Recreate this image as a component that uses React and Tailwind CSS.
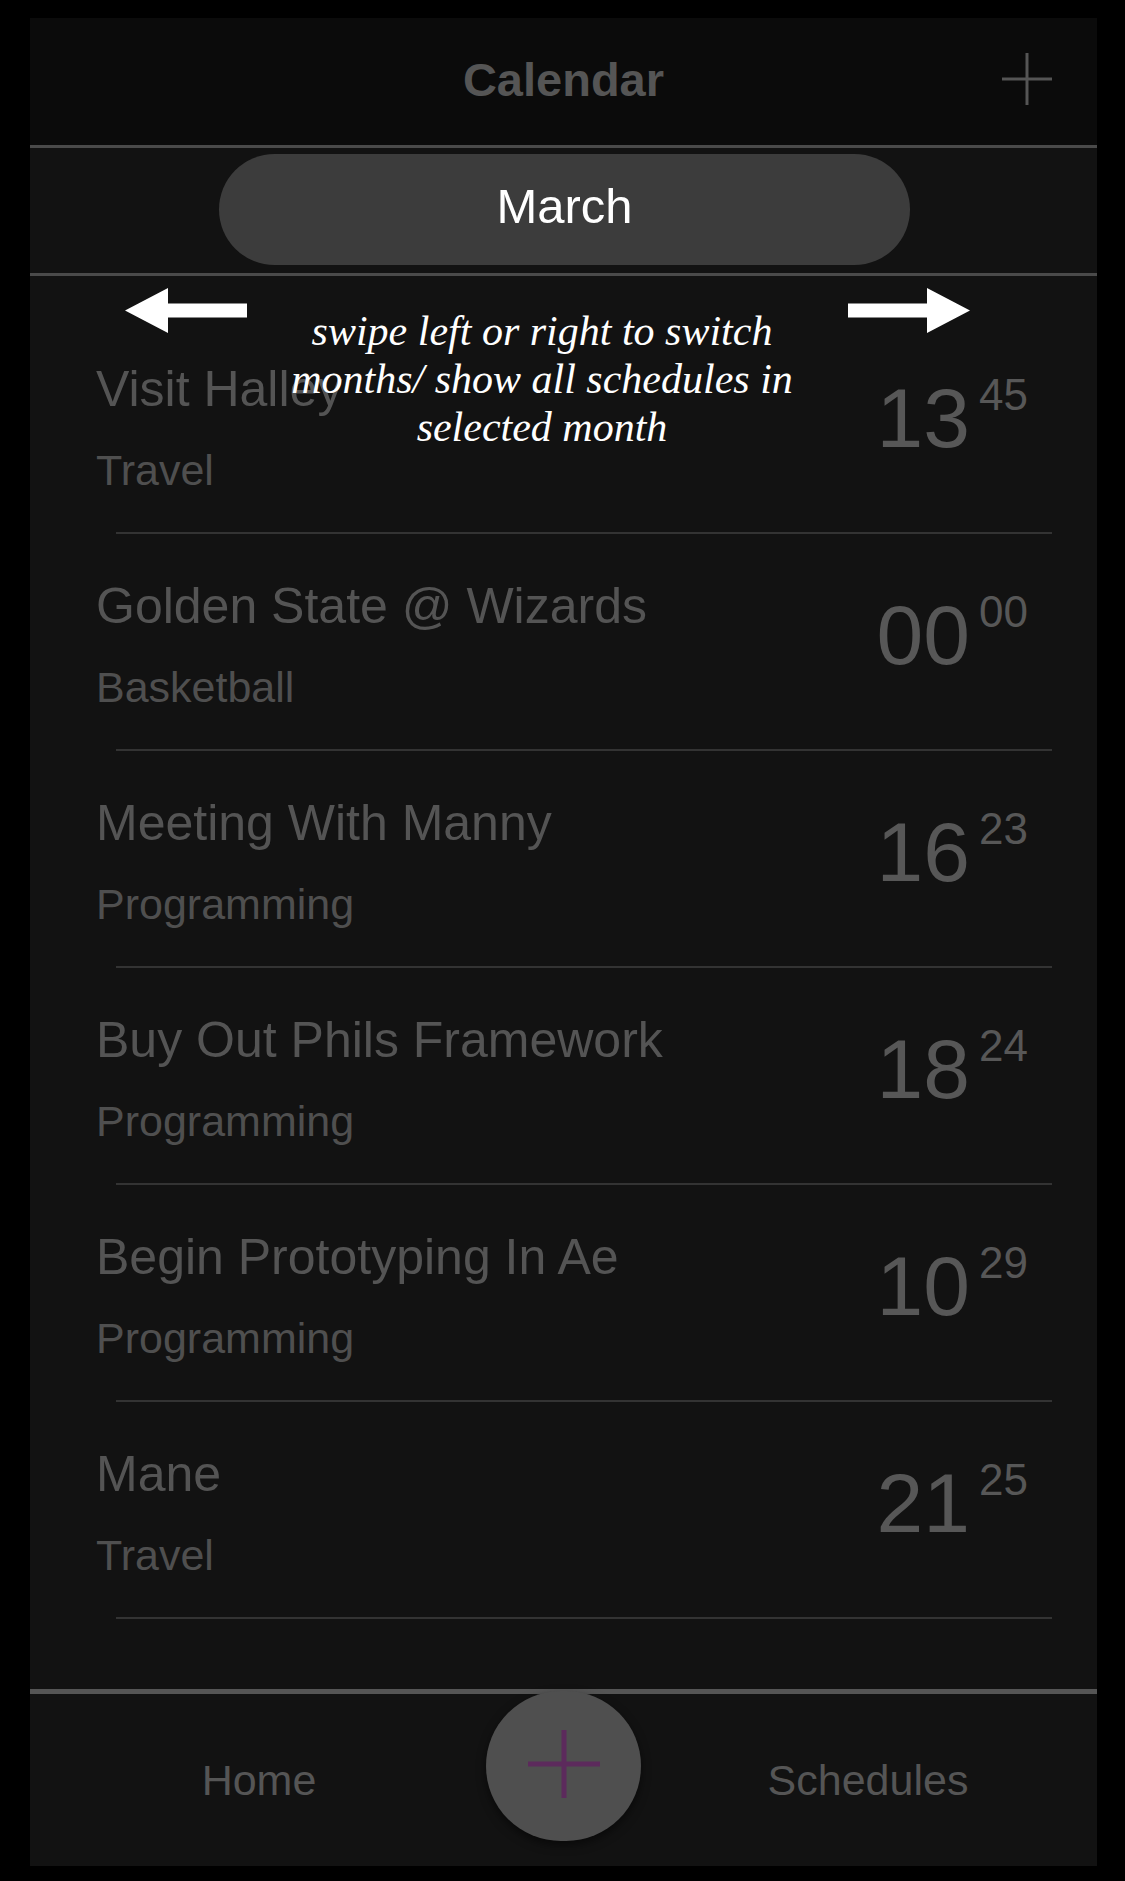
import React from 'react';

const rows = [
  { title: 'Visit Halley', tag: 'Travel', hour: '13', min: '45' },
  { title: 'Golden State @ Wizards', tag: 'Basketball', hour: '00', min: '00' },
  { title: 'Meeting With Manny', tag: 'Programming', hour: '16', min: '23' },
  { title: 'Buy Out Phils Framework', tag: 'Programming', hour: '18', min: '24' },
  { title: 'Begin Prototyping In Ae', tag: 'Programming', hour: '10', min: '29' },
  { title: 'Mane', tag: 'Travel', hour: '21', min: '25' },
];

const sans = { fontFamily: '"Liberation Sans", Arial, sans-serif' };

function Row({ title, tag, hour, min }) {
  return (
    <div className="flex flex-col">
      <div className="h-[215px] flex justify-between pl-[66px] pr-[69px]">
        <div className="flex flex-col pt-[44px]">
          <div className="text-[50px] leading-[56px] text-[#545454] whitespace-nowrap">{title}</div>
          <div className="mt-[29px] text-[43px] leading-[48px] text-[#4f4f4f] whitespace-nowrap">{tag}</div>
        </div>
        <div className="flex items-start pt-[56px]">
          <span className="mt-[3px] text-[84px] leading-[84px] text-[#575757]">{hour}</span>
          <span className="ml-[9px] text-[44px] leading-[44px] text-[#575757]">{min}</span>
        </div>
      </div>
      <div className="ml-[86px] mr-[45px] h-[2px] bg-[#333333]" />
    </div>
  );
}

function Arrow({ dir }) {
  return (
    <svg width="122" height="45" viewBox="0 0 122 45" className={dir === 'right' ? 'rotate-180' : ''}>
      <polygon points="0,22.5 43,0 43,15.5 122,15.5 122,29.5 43,29.5 43,45" fill="#ffffff" />
    </svg>
  );
}

export default function App() {
  return (
    <div className="w-[1125px] h-[1881px] bg-black pl-[30px] pt-[18px]" style={sans}>
      <div className="w-[1067px] h-[1848px] flex flex-col bg-[#121212]">
        {/* header */}
        <div className="h-[127px] bg-[#0b0b0b] grid grid-cols-[1fr_auto_1fr] items-center">
          <div />
          <div className="text-[47px] font-bold text-[#555555] pb-[2px]">Calendar</div>
          <div className="justify-self-end mr-[45px] mb-[6px]">
            <svg width="50" height="52" viewBox="0 0 50 52">
              <line x1="25" y1="0" x2="25" y2="52" stroke="#555555" strokeWidth="3" />
              <line x1="0" y1="26" x2="50" y2="26" stroke="#555555" strokeWidth="3" />
            </svg>
          </div>
        </div>
        <div className="h-[3px] bg-[#4a4a4a]" />

        {/* month switcher */}
        <div className="h-[125px] pt-[6px] flex justify-center">
          <div className="w-[691px] h-[111px] rounded-full bg-[#3c3c3c] flex items-center justify-center ml-[2px]">
            <span className="text-[49px] leading-[56px] text-white -mt-[7px]">March</span>
          </div>
        </div>
        <div className="h-[3px] bg-[#4a4a4a]" />

        {/* list */}
        <div className="flex-1 relative pt-[41px]">
          {rows.map((r) => (
            <Row key={r.title} {...r} />
          ))}

          {/* hint overlay */}
          <div className="absolute left-[95px] top-[12px]">
            <Arrow dir="left" />
          </div>
          <div className="absolute left-[818px] top-[12px]">
            <Arrow dir="right" />
          </div>
          <div
            className="absolute left-[222px] top-[31px] w-[580px] text-center text-white italic text-[42px] leading-[48px] whitespace-nowrap"
            style={{ fontFamily: '"Liberation Serif", "Times New Roman", serif' }}
          >
            swipe left or right to switch
            <br />
            months/ show all schedules in
            <br />
            selected month
          </div>
        </div>

        {/* tab bar */}
        <div className="h-[5px] bg-[#555555]" />
        <div className="h-[172px] flex justify-center items-start gap-[77px]">
          <div className="w-[300px] pt-[62px] text-center text-[43px] leading-[48px] text-[#555555]">Home</div>
          <div className="-mt-[3px] w-[155px] h-[150px] rounded-full bg-[#4f4f4f] shadow-[0_4px_10px_rgba(0,0,0,0.5)] flex items-center justify-center">
            <svg width="72" height="68" viewBox="0 0 72 68" className="-mt-[4px]">
              <line x1="36" y1="0" x2="36" y2="68" stroke="#5c2a5c" strokeWidth="5" />
              <line x1="0" y1="34" x2="72" y2="34" stroke="#5c2a5c" strokeWidth="5" />
            </svg>
          </div>
          <div className="w-[300px] pt-[62px] text-center text-[43px] leading-[48px] text-[#555555]">Schedules</div>
        </div>
      </div>
    </div>
  );
}
